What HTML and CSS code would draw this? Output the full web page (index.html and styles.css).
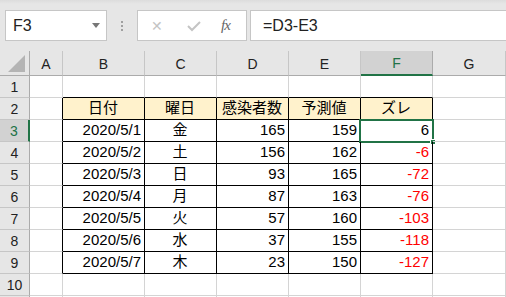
FILE: index.html
```html
<!DOCTYPE html>
<html lang="ja">
<head>
    <meta charset="UTF-8">
    <title>Excel</title>
    <link rel="stylesheet" href="styles.css">
</head>
<body>
    <div class="toolbar">
        <div class="name-box">
            <span>F3</span>
            <i class="drop"></i>
        </div>
        <div class="grip"><i></i><i></i><i></i></div>
        <div class="fx-box">
            <span class="fx-cancel">✕</span>
            <svg class="fx-ok" width="14" height="12" viewBox="0 0 14 12"><path d="M1 6 L5 10 L13 2" fill="none" stroke="#c4c4c4" stroke-width="2"/></svg>
            <span class="fx-label">fx</span>
        </div>
        <div class="formula">=D3-E3</div>
    </div>

    <div class="sheet">
        <div class="corner"><i></i></div>
        <div class="col-head">A</div>
        <div class="col-head">B</div>
        <div class="col-head">C</div>
        <div class="col-head">D</div>
        <div class="col-head">E</div>
        <div class="col-head active">F</div>
        <div class="col-head">G</div>

        <div class="row-head">1</div>
        <div class="cell"></div>
        <div class="cell above"></div><div class="cell above"></div><div class="cell above"></div><div class="cell above"></div><div class="cell above"></div>
        <div class="cell"></div>

        <div class="row-head">2</div>
        <div class="cell before"></div>
        <div class="cell tb th">日付</div>
        <div class="cell tb th">曜日</div>
        <div class="cell tb th">感染者数</div>
        <div class="cell tb th">予測値</div>
        <div class="cell tb th">ズレ</div>
        <div class="cell"></div>

        <div class="row-head active">3</div>
        <div class="cell before"></div>
        <div class="cell tb num">2020/5/1</div>
        <div class="cell tb mid">金</div>
        <div class="cell tb num">165</div>
        <div class="cell tb num">159</div>
        <div class="cell tb num selected">6<i class="sel"></i><i class="handle"></i></div>
        <div class="cell"></div>

        <div class="row-head">4</div>
        <div class="cell before"></div>
        <div class="cell tb num">2020/5/2</div>
        <div class="cell tb mid">土</div>
        <div class="cell tb num">156</div>
        <div class="cell tb num">162</div>
        <div class="cell tb num neg">-6</div>
        <div class="cell"></div>

        <div class="row-head">5</div>
        <div class="cell before"></div>
        <div class="cell tb num">2020/5/3</div>
        <div class="cell tb mid">日</div>
        <div class="cell tb num">93</div>
        <div class="cell tb num">165</div>
        <div class="cell tb num neg">-72</div>
        <div class="cell"></div>

        <div class="row-head">6</div>
        <div class="cell before"></div>
        <div class="cell tb num">2020/5/4</div>
        <div class="cell tb mid">月</div>
        <div class="cell tb num">87</div>
        <div class="cell tb num">163</div>
        <div class="cell tb num neg">-76</div>
        <div class="cell"></div>

        <div class="row-head">7</div>
        <div class="cell before"></div>
        <div class="cell tb num">2020/5/5</div>
        <div class="cell tb mid">火</div>
        <div class="cell tb num">57</div>
        <div class="cell tb num">160</div>
        <div class="cell tb num neg">-103</div>
        <div class="cell"></div>

        <div class="row-head">8</div>
        <div class="cell before"></div>
        <div class="cell tb num">2020/5/6</div>
        <div class="cell tb mid">水</div>
        <div class="cell tb num">37</div>
        <div class="cell tb num">155</div>
        <div class="cell tb num neg">-118</div>
        <div class="cell"></div>

        <div class="row-head">9</div>
        <div class="cell before"></div>
        <div class="cell tb num">2020/5/7</div>
        <div class="cell tb mid">木</div>
        <div class="cell tb num">23</div>
        <div class="cell tb num">150</div>
        <div class="cell tb num neg">-127</div>
        <div class="cell"></div>

        <div class="row-head">10</div>
        <div class="cell"></div><div class="cell"></div><div class="cell"></div><div class="cell"></div><div class="cell"></div><div class="cell"></div><div class="cell"></div>

        <div class="row-head"></div>
        <div class="cell"></div><div class="cell"></div><div class="cell"></div><div class="cell"></div><div class="cell"></div><div class="cell"></div><div class="cell"></div>
    </div>
</body>
</html>
```

FILE: styles.css
```css
* {
    margin: 0;
    padding: 0;
    box-sizing: border-box;
}
body {
    width: 506px;
    height: 297px;
    overflow: hidden;
    background: #fff;
    font-family: "Liberation Sans", "Noto Sans CJK JP", sans-serif;
    color: #000;
}

/* formula bar */
.toolbar {
    height: 51px;
    padding-top: 10px;
    display: flex;
    align-items: flex-start;
    background: linear-gradient(#dcdcdc 0px, #e6e6e6 4px, #e6e6e6 100%);
}
.name-box {
    margin-left: 5px;
    width: 102px;
    height: 31px;
    background: #fff;
    border: 1px solid #c6c6c6;
    display: flex;
    align-items: center;
    justify-content: space-between;
    padding: 0 6px 0 7px;
    font-size: 16px;
    color: #222;
}
.name-box .drop {
    width: 0;
    height: 0;
    border-style: solid;
    border-width: 5px 4px 0 4px;
    border-color: #777 transparent transparent transparent;
}
.grip {
    width: 30px;
    height: 31px;
    display: flex;
    flex-direction: column;
    align-items: center;
    justify-content: center;
    gap: 2px;
}
.grip i {
    width: 2px;
    height: 2px;
    background: #a0a0a0;
}
.fx-box {
    width: 110px;
    height: 31px;
    background: #fff;
    border: 1px solid #c6c6c6;
    display: flex;
    align-items: center;
    padding-left: 13px;
}
.fx-cancel {
    font-size: 14px;
    color: #c4c4c4;
    width: 36px;
}
.fx-label {
    margin-left: 20px;
    font-family: "Liberation Serif", serif;
    font-style: italic;
    font-size: 15px;
    color: #666;
    letter-spacing: -1px;
}
.formula {
    margin-left: 3px;
    flex: 1;
    height: 31px;
    background: #fff;
    border: 1px solid #c6c6c6;
    border-right: none;
    padding-left: 12px;
    display: flex;
    align-items: center;
    font-size: 16px;
    color: #222;
}

/* sheet grid */
.sheet {
    display: grid;
    grid-template-columns: 30px 33px 82px 72px 72px 72px 72px 73px;
    grid-template-rows: 25px repeat(10, 22px) 2px;
    overflow: hidden;
}
.corner {
    position: relative;
    background: #e6e6e6;
    border-right: 1px solid #ababab;
    border-bottom: 1px solid #ababab;
}
.corner i {
    position: absolute;
    right: 4px;
    bottom: 3px;
    width: 0;
    height: 0;
    border-style: solid;
    border-width: 0 0 17px 17px;
    border-color: transparent transparent #b4b4b4 transparent;
}
.col-head {
    background: #e6e6e6;
    border-right: 1px solid #c6c6c6;
    border-bottom: 1px solid #ababab;
    display: flex;
    align-items: center;
    justify-content: center;
    font-size: 14px;
    color: #222;
    padding-top: 1px;
}
.col-head.active {
    background: #d2d2d2;
    color: #217346;
    border-bottom: 2px solid #217346;
    border-right-color: #ababab;
}
.row-head {
    background: #e6e6e6;
    border-right: 1px solid #ababab;
    border-bottom: 1px solid #c6c6c6;
    display: flex;
    align-items: center;
    justify-content: center;
    font-size: 14px;
    color: #222;
}
.row-head.active {
    background: #d2d2d2;
    color: #217346;
    border-right: 2px solid #217346;
}
.cell {
    position: relative;
    border-right: 1px solid #d4d4d4;
    border-bottom: 1px solid #d4d4d4;
    font-size: 15px;
    display: flex;
    align-items: flex-end;
    padding: 0 3px 3px 2px;
    white-space: nowrap;
}
.cell.above {
    border-bottom-color: #000;
}
.cell.before {
    border-right-color: #000;
}
.cell.tb {
    border-right-color: #000;
    border-bottom-color: #000;
}
.cell.th {
    background: #fff2cc;
    justify-content: center;
    padding-bottom: 2px;
}
.cell.mid {
    justify-content: center;
    padding-bottom: 2px;
}
.cell.num {
    justify-content: flex-end;
}
.cell.neg {
    color: #ff0000;
}
.sel {
    position: absolute;
    left: -2px;
    top: -1px;
    right: -2px;
    bottom: -2px;
    border: 2px solid #217346;
}
.handle {
    position: absolute;
    right: -4px;
    bottom: -4px;
    width: 6px;
    height: 6px;
    background: #217346;
    border: 1px solid #fff;
}
```
